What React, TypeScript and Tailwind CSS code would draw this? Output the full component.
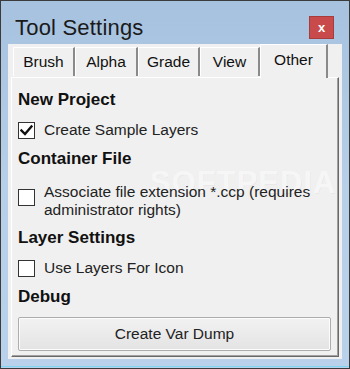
import React from "react";

const F = { fontFamily: '"Liberation Sans", Arial, sans-serif' };

function Check({ checked }: { checked?: boolean }) {
  return (
    <div className="w-[17px] h-[17px] shrink-0 bg-white border border-[#333333] flex items-center justify-center">
      {checked && (
        <svg width="13" height="13" viewBox="0 0 13 13">
          <path d="M1.5 6.5 L5 10 L11.5 2.5" fill="none" stroke="#111" strokeWidth="2.4" strokeLinecap="square" />
        </svg>
      )}
    </div>
  );
}

function Tab({ label, w }: { label: string; w: string }) {
  return (
    <div
      className={`${w} h-[29px] mt-[3px] flex items-center justify-center border-t border-l border-white border-r-2 border-r-[#8a8a8a] text-[15.5px] text-[#111]`}
    >
      {label}
    </div>
  );
}

export default function App() {
  return (
    <div style={F} className="w-[350px] h-[369px] bg-[#3b3b3b] p-[1px] overflow-hidden">
      <div className="w-full h-full flex flex-col bg-gradient-to-b from-[#a6c2df] via-[#b7cfe8] to-[#b9d1ea] relative overflow-hidden">
        {/* title bar */}
        <div className="h-[43px] shrink-0 flex items-start justify-between">
          <div className="pl-[14px] pt-[15px] text-[22px] leading-[24px] text-[#1a1a1a] tracking-[0.2px]">Tool Settings</div>
          <div className="mt-[15px] mr-[15px] w-[25px] h-[23px] bg-[#c94a4b] border border-[#a83c3c] flex items-center justify-center text-white font-bold text-[13px] leading-none">
            x
          </div>
        </div>
        {/* client */}
        <div className="mx-[7px] h-[315px] bg-[#f0f0f0] flex flex-col px-[3px]">
          {/* tab row */}
          <div className="flex items-start pl-[2px] h-[33px]">
            <Tab label="Brush" w="w-[62px]" />
            <Tab label="Alpha" w="w-[63px]" />
            <Tab label="Grade" w="w-[62px]" />
            <Tab label="View" w="w-[60px]" />
            <div className="w-[68px] h-[34px] bg-[#f0f0f0] flex items-center justify-center border-t border-l border-white border-r-2 border-r-[#8a8a8a] text-[15.5px] text-[#111] pb-[3px] relative z-10 -mb-[1px]">
              Other
            </div>
          </div>
          {/* sheet */}
          <div className="h-[280px] border-t border-l border-white border-r border-b border-r-[#696969] border-b-[#696969] shadow-[inset_-1px_-1px_0_#a0a0a0] flex flex-col pl-[6px] pr-[7px] pt-[12px] relative overflow-hidden">
            <div className="h-[20px] leading-[20px] font-bold text-[17px] text-[#111]">New Project</div>
            <div className="mt-[10px] h-[20px] flex items-center gap-[9px]">
              <Check checked />
              <span className="text-[15.5px] text-[#222]">Create Sample Layers</span>
            </div>
            <div className="mt-[9px] h-[20px] leading-[20px] font-bold text-[17px] text-[#111]">Container File</div>
            <div className="mt-[14px] flex items-start gap-[9px] relative z-10">
              <div className="mt-[6px]">
                <Check />
              </div>
              <span className="text-[15.5px] leading-[18px] text-[#222]">
                Associate file extension *.ccp (requires
                <br />
                administrator rights)
              </span>
            </div>
            <div className="mt-[9px] h-[20px] leading-[20px] font-bold text-[17px] text-[#111]">Layer Settings</div>
            <div className="mt-[10px] h-[20px] flex items-center gap-[9px]">
              <Check />
              <span className="text-[15.5px] text-[#222]">Use Layers For Icon</span>
            </div>
            <div className="mt-[9px] h-[20px] leading-[20px] font-bold text-[17px] text-[#111]">Debug</div>
            <div className="mt-[10px] h-[34px] border border-[#adadad] rounded-[2px] bg-gradient-to-b from-[#f2f2f2] to-[#e3e3e3] shadow-[inset_0_0_0_1px_#fcfcfc] flex items-center justify-center text-[15.5px] text-[#222]">
              Create Var Dump
            </div>
            <div
              className="absolute left-[138px] top-[88px] text-[31px] leading-[34px] font-bold tracking-[1px] text-[#f6f6f6] pointer-events-none select-none whitespace-nowrap z-0"
              style={{ textShadow: "1px 1px 0 rgba(0,0,0,0.035)" }}
            >
              SOFTPEDIA
            </div>
          </div>
        </div>
        {/* bottom frame */}
        <div className="flex-1" />
        <div className="h-[1px] bg-[#7fd6f0]" />
        <div className="h-[1px]" />
      </div>
    </div>
  );
}
